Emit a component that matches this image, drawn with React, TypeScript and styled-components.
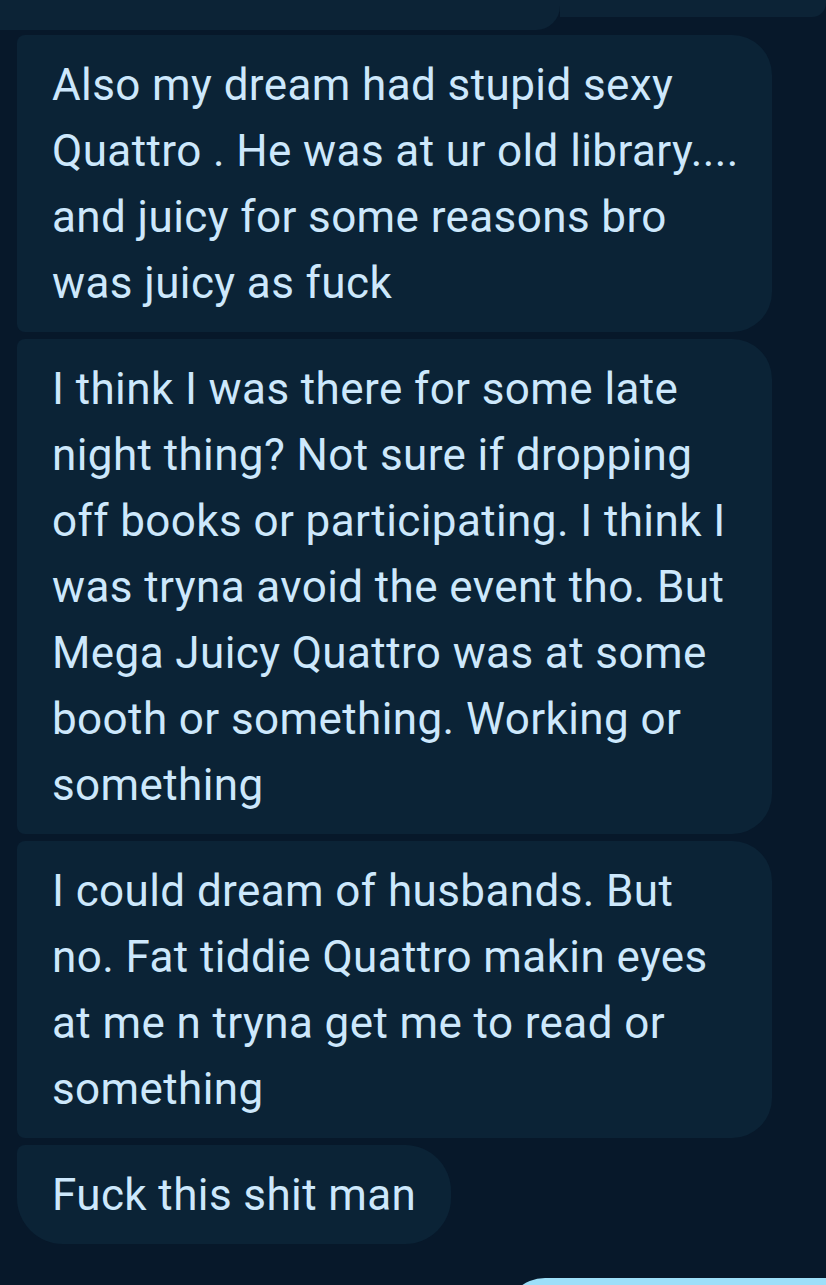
import React from "react";
import styled, { createGlobalStyle } from "styled-components";

const GlobalStyle = createGlobalStyle`
  html, body {
    margin: 0;
    padding: 0;
    background: #07182a;
  }
`;

type Message = {
  lines: string[];
  wide?: boolean;
  last?: boolean;
};

const messages: Message[] = [
  {
    lines: [
      "Also my dream had stupid sexy",
      "Quattro . He was at ur old library....",
      "and juicy for some reasons bro",
      "was juicy as fuck",
    ],
    wide: true,
  },
  {
    lines: [
      "I think I was there for some late",
      "night thing? Not sure if dropping",
      "off books or participating. I think I",
      "was tryna avoid the event tho. But",
      "Mega Juicy Quattro was at some",
      "booth or something. Working or",
      "something",
    ],
    wide: true,
  },
  {
    lines: [
      "I could dream of husbands. But",
      "no. Fat tiddie Quattro makin eyes",
      "at me n tryna get me to read or",
      "something",
    ],
    wide: true,
  },
  { lines: ["Fuck this shit man"], last: true },
];

const App: React.FC = () => {
  return (
    <>
      <GlobalStyle />
      <Screen>
        <PrevEdge>
          <PrevBubble />
          <PrevTail />
        </PrevEdge>
        <Thread>
          {messages.map((m, i) => (
            <Bubble key={i} $wide={m.wide} $last={m.last}>
              {m.lines.map((line, j) => (
                <Line key={j}>{line}</Line>
              ))}
            </Bubble>
          ))}
        </Thread>
        <SentRow>
          <SentBubble />
        </SentRow>
      </Screen>
    </>
  );
};

const Screen = styled.div`
  width: 826px;
  height: 1285px;
  overflow: hidden;
  background: #07182a;
  font-family: Roboto, "Noto Sans", sans-serif;
  display: flex;
  flex-direction: column;
`;

const PrevEdge = styled.div`
  display: flex;
  align-items: flex-start;
  height: 30px;
  flex-shrink: 0;
`;

const PrevBubble = styled.div`
  width: 560px;
  height: 30px;
  background: #0c2336;
  border-bottom-right-radius: 24px;
`;

const PrevTail = styled.div`
  flex: 1;
  height: 17px;
  background: #0c2336;
  border-bottom-right-radius: 14px;
`;

const Thread = styled.div`
  display: flex;
  flex-direction: column;
  align-items: flex-start;
  gap: 7px;
  padding: 5px 0 0 17px;
`;

const Bubble = styled.div<{ $wide?: boolean; $last?: boolean }>`
  box-sizing: border-box;
  width: ${(p) => (p.$wide ? "755px" : "auto")};
  padding: 16.5px 35px;
  background: #0b2336;
  color: #cde8fc;
  font-size: 44px;
  line-height: 66px;
  letter-spacing: 0.4px;
  border-radius: ${(p) => (p.$last ? "8px 46px 46px 46px" : "8px 40px 40px 8px")};
`;

const Line = styled.div`
  white-space: nowrap;
`;

const SentRow = styled.div`
  display: flex;
  justify-content: flex-end;
  margin-top: 34px;
`;

const SentBubble = styled.div`
  width: 333px;
  height: 60px;
  margin-right: -12px;
  flex-shrink: 0;
  background: #9ddff9;
  border-radius: 40px 0 0 0;
`;

export default App;
